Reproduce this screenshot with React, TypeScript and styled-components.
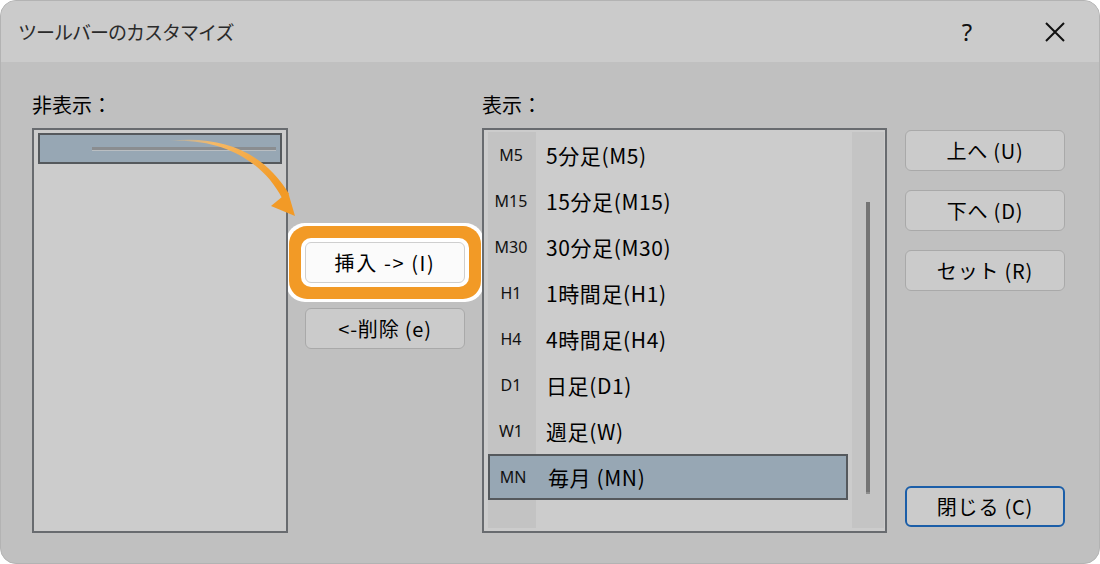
import styled, { createGlobalStyle } from "styled-components";

const GlobalStyle = createGlobalStyle`
  html, body {
    margin: 0;
    padding: 0;
    background: #ffffff;
  }
  body {
    font-family: "Noto Sans CJK JP", "Noto Sans", sans-serif;
    color: #000;
  }
`;

const Dialog = styled.div`
  position: relative;
  width: 1100px;
  height: 564px;
  box-sizing: border-box;
  border: 1px solid #b3b3b3;
  border-radius: 16px;
  background: #c0c0c0;
  overflow: hidden;
  display: flex;
  flex-direction: column;
`;

const TitleBar = styled.div`
  height: 61px;
  flex-shrink: 0;
  background: #cbcbcb;
  display: flex;
  align-items: center;
  padding-left: 17px;
`;

const Title = styled.div`
  font-size: 19px;
  color: #2a2a2a;
  flex: 1;
  letter-spacing: -1px;
`;

const TitleButton = styled.div`
  width: 88px;
  display: flex;
  justify-content: center;
  align-items: center;
  font-family: "Noto Sans", sans-serif;
  font-size: 24px;
  color: #111;
`;

const Body = styled.div`
  flex: 1;
  display: flex;
  padding: 30px 0 0 31px;
`;

const ListColumn = styled.div<{ w: number }>`
  width: ${(p) => p.w}px;
  display: flex;
  flex-direction: column;
`;

const Label = styled.div`
  font-size: 20px;
  line-height: 26px;
  height: 26px;
  margin-bottom: 10px;
`;

const ListBox = styled.div`
  height: 405px;
  box-sizing: border-box;
  border: 2px solid #686b6f;
  background: #cccccc;
  padding: 2px 4px 3px;
  position: relative;
`;

const HiddenRow = styled.div`
  height: 31px;
  margin-top: 1px;
  box-sizing: border-box;
  border: 2px solid #55595d;
  background: #97a7b4;
  display: flex;
  align-items: center;
  padding-left: 52px;
  padding-right: 4px;
`;

const Dash = styled.div`
  flex: 1;
  height: 3px;
  background: #8a8d90;
  border-bottom: 1px solid #b9bec2;
`;

const MiddleColumn = styled.div`
  width: 194px;
  display: flex;
  flex-direction: column;
  align-items: flex-start;
  padding-top: 150px;
  padding-left: 17px;
  box-sizing: border-box;
  gap: 25px;
`;

const Button = styled.div<{ variant?: "white" | "default" | "primary" }>`
  width: 160px;
  height: 41px;
  box-sizing: border-box;
  border-radius: 6px;
  display: flex;
  justify-content: center;
  align-items: center;
  font-size: 20px;
  letter-spacing: 0.8px;
  background: ${(p) => (p.variant === "white" ? "#fbfbfb" : "#cbcbcb")};
  border: ${(p) =>
    p.variant === "primary"
      ? "2px solid #1b5ea8"
      : p.variant === "white"
      ? "1px solid #cfcfcf"
      : "1px solid #a9a9a9"};
`;

const Highlighted = styled(Button)`
  letter-spacing: 1.6px;
  box-shadow: 0 0 0 4px #ffffff, 0 0 0 16px #f29a26, 0 0 0 19px #ffffff;
`;

const ShownList = styled.div`
  display: flex;
  height: 100%;
`;

const Rows = styled.div`
  flex: 1;
  display: flex;
  flex-direction: column;
  background: linear-gradient(to right, #c3c3c3 48px, #cccccc 48px);
`;

const Row = styled.div<{ selected?: boolean }>`
  height: 46px;
  flex-shrink: 0;
  box-sizing: border-box;
  display: flex;
  align-items: center;
  ${(p) => (p.selected ? `background: #97a7b4; border: 2px solid #55595d;` : ``)}
`;

const Code = styled.div`
  width: 48px;
  margin-left: -1px;
  text-align: center;
  font-family: "Noto Sans", sans-serif;
  font-size: 16px;
  color: #111;
`;

const RowLabel = styled.div`
  margin-left: 11px;
  font-size: 21px;
  letter-spacing: 0.6px;
`;

const Track = styled.div`
  width: 32px;
  margin-left: 4px;
  margin-right: -3px;
  background: #c4c4c4;
  display: flex;
  justify-content: center;
  padding-top: 70px;
  padding-bottom: 34px;
`;

const Thumb = styled.div`
  width: 4px;
  background: #747474;
  border-bottom: 2px solid #8d8d8d;
`;

const SideColumn = styled.div`
  width: 160px;
  margin-left: 18px;
  padding-top: 38px;
  display: flex;
  flex-direction: column;
  gap: 19px;
`;

const CloseSlot = styled.div`
  margin-top: 176px;
`;

const Arrow = styled.svg`
  position: absolute;
  left: 160px;
  top: 130px;
  pointer-events: none;
`;

const rows = [
  { code: "M5", label: "5分足(M5)" },
  { code: "M15", label: "15分足(M15)" },
  { code: "M30", label: "30分足(M30)" },
  { code: "H1", label: "1時間足(H1)" },
  { code: "H4", label: "4時間足(H4)" },
  { code: "D1", label: "日足(D1)" },
  { code: "W1", label: "週足(W)" },
  { code: "MN", label: "毎月 (MN)", selected: true },
];

export default function App() {
  return (
    <>
      <GlobalStyle />
      <Dialog>
        <TitleBar>
          <Title>ツールバーのカスタマイズ</Title>
          <TitleButton>?</TitleButton>
          <TitleButton>
            <svg width="22" height="22" viewBox="0 0 22 22">
              <path d="M2 2 L20 20 M20 2 L2 20" stroke="#111" strokeWidth="2" />
            </svg>
          </TitleButton>
        </TitleBar>
        <Body>
          <ListColumn w={256}>
            <Label>非表示：</Label>
            <ListBox>
              <HiddenRow>
                <Dash />
              </HiddenRow>
            </ListBox>
          </ListColumn>
          <MiddleColumn>
            <Highlighted variant="white">挿入 -&gt; (I)</Highlighted>
            <Button>&lt;-削除 (e)</Button>
          </MiddleColumn>
          <ListColumn w={405}>
            <Label>表示：</Label>
            <ListBox>
              <ShownList>
                <Rows>
                  {rows.map((r) => (
                    <Row key={r.code} selected={r.selected}>
                      <Code>{r.code}</Code>
                      <RowLabel>{r.label}</RowLabel>
                    </Row>
                  ))}
                </Rows>
                <Track>
                  <Thumb />
                </Track>
              </ShownList>
            </ListBox>
          </ListColumn>
          <SideColumn>
            <Button>上へ (U)</Button>
            <Button>下へ (D)</Button>
            <Button>セット (R)</Button>
            <CloseSlot>
              <Button variant="primary">閉じる (C)</Button>
            </CloseSlot>
          </SideColumn>
        </Body>
        <Arrow width="150" height="100" viewBox="0 0 150 100">
          <defs>
            <linearGradient id="ag" x1="0" y1="0" x2="1" y2="0.6">
              <stop offset="0" stopColor="#f7c27a" stopOpacity="0.2" />
              <stop offset="0.3" stopColor="#f6b965" />
              <stop offset="1" stopColor="#f29a26" />
            </linearGradient>
          </defs>
          <path
            d="M8 10 C 60 7, 101 29, 121 67 L 128 63 C 104 22, 62 4, 8 10 Z"
            fill="url(#ag)"
          />
          <path d="M110 75 L 127 61 L 134 85 Z" fill="#f29a26" />
        </Arrow>
      </Dialog>
    </>
  );
}
